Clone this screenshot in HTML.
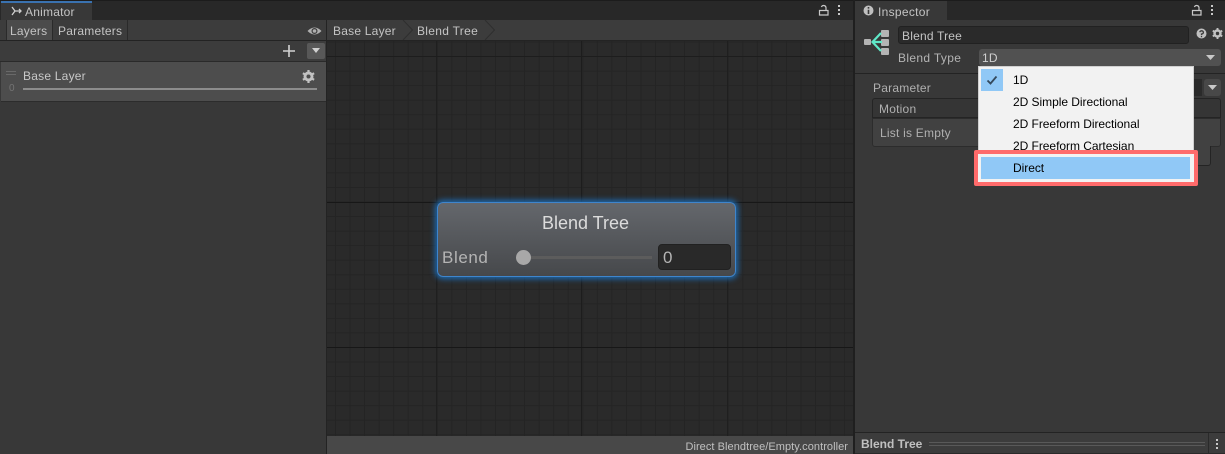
<!DOCTYPE html>
<html><head><meta charset="utf-8"><style>
html,body{margin:0;padding:0;background:#383838}
#r{position:relative;width:1225px;height:454px;overflow:hidden;background:#383838;font:12px "Liberation Sans",sans-serif;color:#c4c4c4}
#r div,#r svg{position:absolute}
.t{white-space:nowrap;line-height:14px;letter-spacing:.22px}
.m{color:#000;font-size:12px;letter-spacing:-.04px;left:1013px}
</style></head><body><div id="r">
<!-- top bars -->
<div style="left:0;top:0;width:1225px;height:20px;background:#282828;border-top:1px solid #1c1c1c;box-sizing:border-box"></div>
<div style="left:1px;top:1px;width:91px;height:19px;background:#383838"></div>
<div style="left:1px;top:1px;width:91px;height:2px;background:#3a72b0"></div>
<svg style="left:10px;top:5px" width="13" height="12" viewBox="0 0 13 12" fill="none" stroke="#d0d0d0" stroke-width="1.3"><path d="M2 2 L5 6 L2 10 M5 6 H11 M9 4 L11 6 L9 8"/></svg>
<div class="t" style="left:25px;top:5px">Animator</div>
<svg style="left:818px;top:4px" width="12" height="12" viewBox="0 0 12 12" fill="none" stroke="#c8c8c8" stroke-width="1.2"><path d="M1.5 6.5 H10 V11 H1.5Z M8 6.5 V3.5 A2.4 2.4 0 0 0 3.4 3"/></svg>
<div style="left:838px;top:5px;width:2px;height:2px;background:#c8c8c8;box-shadow:0 4px #c8c8c8,0 8px #c8c8c8"></div>

<!-- left toolbar -->
<div style="left:0;top:20px;width:326px;height:21px;background:#3c3c3c;border-bottom:1px solid #232323;box-sizing:border-box"></div>
<div style="left:6px;top:20px;width:47px;height:20px;background:#4b4b4b;border-left:1px solid #2a2a2a;border-right:1px solid #2a2a2a;box-sizing:border-box"></div>
<div style="left:53px;top:20px;width:75px;height:20px;border-right:1px solid #2a2a2a;box-sizing:border-box"></div>
<div class="t" style="left:10px;top:24px">Layers</div>
<div class="t" style="left:58px;top:24px">Parameters</div>
<svg style="left:307px;top:26px" width="15" height="10" viewBox="0 0 15 10"><path d="M0.5 5 Q7.5 -2 14.5 5 Q7.5 12 0.5 5Z" fill="#b0b0b0"/><circle cx="7.5" cy="5" r="3" fill="#3c3c3c"/><circle cx="7.5" cy="5" r="1.8" fill="#b0b0b0"/></svg>
<div style="left:0;top:41px;width:326px;height:21px;background:#3c3c3c;border-bottom:1px solid #2a2a2a;box-sizing:border-box"></div>
<svg style="left:282px;top:44px" width="14" height="14" viewBox="0 0 14 14" stroke="#d2d2d2" stroke-width="1.6"><path d="M7 1 V13 M1 7 H13"/></svg>
<div style="left:307px;top:43px;width:18px;height:16px;background:#585858;border-radius:2px"></div>
<svg style="left:312px;top:48px" width="8" height="5" viewBox="0 0 8 5"><path d="M0 0 H8 L4 5Z" fill="#d0d0d0"/></svg>
<!-- layer -->
<div style="left:1px;top:62px;width:325px;height:40px;background:#4d4d4d;border-bottom:1px solid #2c2c2c;box-sizing:border-box"></div>
<div style="left:6px;top:71px;width:10px;height:1px;background:#696969;box-shadow:0 3px #696969"></div>
<div class="t" style="left:23px;top:69px;color:#c8c8c8">Base Layer</div>
<div class="t" style="left:9px;top:82px;font-size:10px;color:#747474">0</div>
<div style="left:23px;top:88px;width:294px;height:2px;background:#8c8c8c"></div>
<svg style="left:302px;top:70px" width="13" height="13" viewBox="0 0 13 13"><circle cx="6.5" cy="6.5" r="3.7" fill="none" stroke="#c2c2c2" stroke-width="2.6"/><path d="M6.5 0 V13 M0.9 3.2 L12.1 9.8 M12.1 3.2 L0.9 9.8" stroke="#c2c2c2" stroke-width="2.2"/><circle cx="6.5" cy="6.5" r="2" fill="#4d4d4d"/></svg>

<!-- divider -->
<div style="left:326px;top:20px;width:1px;height:434px;background:#232323"></div>

<!-- breadcrumb -->
<div style="left:327px;top:20px;width:526px;height:21px;background:#3c3c3c;border-bottom:1px solid #232323;box-sizing:border-box"></div>
<svg style="left:327px;top:20px" width="180" height="20" fill="none" stroke="#2e2e2e"><path d="M76 0 L85.5 10 L76 20 M158 0 L167.5 10 L158 20"/></svg>
<div class="t" style="left:333px;top:24px">Base Layer</div>
<div class="t" style="left:417px;top:24px;letter-spacing:.3px">Blend Tree</div>

<!-- graph -->
<div style="left:327px;top:41px;width:526px;height:395px;background-color:#2a2a2a;
background-image:
linear-gradient(#1d1d1d,#1d1d1d),linear-gradient(#171717,#171717),linear-gradient(#171717,#171717),
linear-gradient(#1d1d1d,#1d1d1d),linear-gradient(#1f1f1f,#1f1f1f),linear-gradient(#1f1f1f,#1f1f1f),
linear-gradient(#242424 1px,transparent 1px),linear-gradient(90deg,#242424 1px,transparent 1px);
background-size:100% 1px,100% 1px,100% 1px,1px 100%,1px 100%,1px 100%,14.55px 14.55px,14.55px 14.55px;
background-position:0 15px,0 161px,0 306px,254px 0,400px 0,109px 0,0 0.5px,8px 0;
background-repeat:no-repeat,no-repeat,no-repeat,no-repeat,no-repeat,no-repeat,repeat,repeat"></div>

<!-- node -->
<div style="left:437px;top:202px;width:299px;height:75px;box-sizing:border-box;border:1px solid #3f85cc;border-radius:6px;background:linear-gradient(#64676c,#46484b);box-shadow:0 0 6px 2px #1d6ab0"></div>
<div class="t" style="left:437px;top:213px;width:297px;text-align:center;font-size:18px;line-height:20px;letter-spacing:0;color:#dcdcdc">Blend Tree</div>
<div class="t" style="left:442px;top:248px;font-size:17px;line-height:20px;letter-spacing:.6px;color:#b4b4b4">Blend</div>
<div style="left:524px;top:256px;width:128px;height:3px;background:#5c5c5c"></div>
<div style="left:516px;top:250px;width:15px;height:15px;border-radius:50%;background:#a8a8a8"></div>
<div style="left:658px;top:244px;width:73px;height:26px;box-sizing:border-box;background:#292929;border:1px solid #212121;border-radius:4px"></div>
<div class="t" style="left:663px;top:248px;font-size:17px;line-height:20px;color:#b4b4b4">0</div>

<!-- status -->
<div style="left:327px;top:436px;width:526px;height:18px;background:#484848"></div>
<div class="t" style="right:377px;top:440px;font-size:11px;letter-spacing:.06px;color:#c0c0c0">Direct Blendtree/Empty.controller</div>

<!-- inspector -->
<div style="left:853px;top:0;width:2px;height:454px;background:#1f1f1f"></div>
<div style="left:855px;top:1px;width:92px;height:19px;background:#383838"></div>
<svg style="left:863px;top:5px" width="11" height="11" viewBox="0 0 11 11"><circle cx="5.5" cy="5.5" r="5" fill="#c0c0c0"/><path d="M5.5 2 V3.6 M5.5 4.8 V9" stroke="#383838" stroke-width="1.6"/></svg>
<div class="t" style="left:878px;top:5px;letter-spacing:.3px">Inspector</div>
<svg style="left:1191px;top:4px" width="12" height="12" viewBox="0 0 12 12" fill="none" stroke="#c8c8c8" stroke-width="1.2"><path d="M1.5 6.5 H10 V11 H1.5Z M8 6.5 V3.5 A2.4 2.4 0 0 0 3.4 3"/></svg>
<div style="left:1211px;top:5px;width:2px;height:2px;background:#c8c8c8;box-shadow:0 4px #c8c8c8,0 8px #c8c8c8"></div>

<svg style="left:864px;top:29px" width="26" height="26" viewBox="0 0 26 26"><g fill="#b4b4b4"><rect x="0" y="10" width="7" height="6" rx="1"/><rect x="17" y="1" width="8" height="7" rx="1"/><rect x="17" y="10" width="8" height="7" rx="1"/><rect x="17" y="19" width="8" height="7" rx="1"/></g><path d="M17 4 L8.5 13 L17 22 M8.5 13 H18" fill="none" stroke="#5fe8c8" stroke-width="2.2"/></svg>
<div style="left:898px;top:26px;width:291px;height:18px;box-sizing:border-box;background:#2a2a2a;border:1px solid #212121;border-radius:3px"></div>
<div class="t" style="left:902px;top:29px;letter-spacing:.2px">Blend Tree</div>
<svg style="left:1196px;top:28px" width="11" height="11" viewBox="0 0 11 11"><circle cx="5.5" cy="5.5" r="5" fill="#c0c0c0"/><path d="M3.8 4.2 A1.8 1.6 0 1 1 5.5 6 V7" fill="none" stroke="#383838" stroke-width="1.3"/><path d="M5.5 7.8 V9.2" stroke="#383838" stroke-width="1.3"/></svg>
<svg style="left:1212px;top:28px" width="11" height="11" viewBox="0 0 13 13"><circle cx="6.5" cy="6.5" r="3.7" fill="none" stroke="#c2c2c2" stroke-width="2.6"/><path d="M6.5 0 V13 M0.9 3.2 L12.1 9.8 M12.1 3.2 L0.9 9.8" stroke="#c2c2c2" stroke-width="2.2"/><circle cx="6.5" cy="6.5" r="2" fill="#383838"/></svg>
<div class="t" style="left:898px;top:51px;letter-spacing:.35px;color:#b4b4b4">Blend Type</div>
<div style="left:979px;top:49px;width:242px;height:17px;background:#515151;border-radius:3px"></div>
<div class="t" style="left:982px;top:51px;color:#d0d0d0">1D</div>
<svg style="left:1206px;top:55px" width="9" height="5" viewBox="0 0 9 5"><path d="M0 0 H9 L4.5 5Z" fill="#c8c8c8"/></svg>
<div style="left:855px;top:73px;width:370px;height:1px;background:#232323"></div>

<div class="t" style="left:873px;top:81px;color:#b0b0b0">Parameter</div>
<div style="left:1150px;top:79px;width:52px;height:17px;background:#2a2a2a"></div>
<div style="left:1204px;top:79px;width:17px;height:17px;background:#484848;border-radius:3px"></div>
<svg style="left:1208px;top:85px" width="9" height="5" viewBox="0 0 9 5"><path d="M0 0 H9 L4.5 5Z" fill="#c8c8c8"/></svg>
<div style="left:872px;top:98px;width:349px;height:20px;box-sizing:border-box;background:#353535;border:1px solid #242424;border-radius:3px 3px 0 0"></div>
<div class="t" style="left:879px;top:102px;color:#b0b0b0">Motion</div>
<div style="left:872px;top:118px;width:349px;height:29px;box-sizing:border-box;background:#414141;border:1px solid #2c2c2c;border-radius:0 0 3px 3px"></div>
<div class="t" style="left:880px;top:126px;color:#b0b0b0">List is Empty</div>
<div style="left:1150px;top:146px;width:61px;height:20px;box-sizing:border-box;background:#414141;border:1px solid #242424;border-top:0;border-radius:0 0 3px 3px"></div>

<!-- menu -->
<div style="left:978px;top:66px;width:216px;height:95px;background:#f2f2f2;border:1px solid #d0d0d0;box-sizing:border-box"></div>
<div style="left:981px;top:69px;width:22px;height:22px;background:#90c8f6"></div>
<svg style="left:986px;top:74px" width="12" height="12" viewBox="0 0 12 12" fill="none" stroke="#34495c" stroke-width="1.8"><path d="M1.5 6.5 L4.5 9.5 L10.5 2.5"/></svg>
<div class="t m" style="top:73px">1D</div>
<div class="t m" style="top:95px">2D Simple Directional</div>
<div class="t m" style="top:117px">2D Freeform Directional</div>
<div class="t m" style="top:139px">2D Freeform Cartesian</div>
<div style="left:974px;top:150px;width:224px;height:36px;box-sizing:border-box;border:4px solid #ff6b6b;border-radius:2px;background:#f2f2f2"></div>
<div style="left:981px;top:157px;width:209px;height:22px;background:#90c8f6"></div>
<div class="t m" style="top:161px">Direct</div>

<!-- footer -->
<div style="left:855px;top:432px;width:370px;height:22px;box-sizing:border-box;background:#3c3c3c;border-top:1px solid #232323;border-bottom:1px solid #2a2a2a"></div>
<div class="t" style="left:861px;top:437px;font-weight:bold;letter-spacing:0;color:#c0c0c0">Blend Tree</div>
<div style="left:929px;top:442px;width:276px;height:1px;background:#595959;box-shadow:0 3px #595959"></div>
<div style="left:1208px;top:433px;width:1px;height:20px;background:#2a2a2a"></div>
<div style="left:1216px;top:439px;width:2px;height:2px;background:#c8c8c8;box-shadow:0 4px #c8c8c8,0 8px #c8c8c8"></div>
</div></body></html>
